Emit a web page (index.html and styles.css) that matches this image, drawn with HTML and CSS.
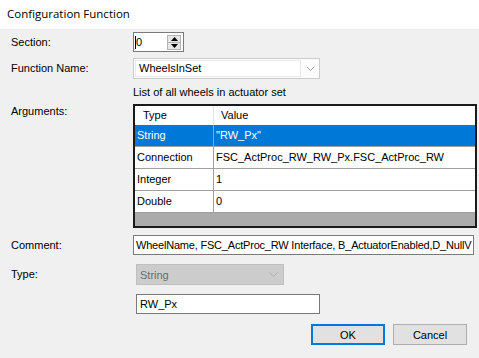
FILE: index.html
```html
<!DOCTYPE html>
<html>
<head>
<meta charset="utf-8">
<link rel="stylesheet" href="styles.css">
</head>
<body>
<div class="title">Configuration Function</div>
<div class="content">
  <div class="row r-section">
    <div class="lbl">Section:</div>
    <div class="spin">
      <div class="spin-val"><span class="caret"></span>0</div>
      <div class="spin-btns">
        <div class="sbtn"><svg width="7" height="4" viewBox="0 0 7 4"><path d="M0 4 L3.5 0 L7 4 Z" fill="#000"/></svg></div>
        <div class="sbtn"><svg width="7" height="4" viewBox="0 0 7 4"><path d="M0 0 L3.5 4 L7 0 Z" fill="#000"/></svg></div>
      </div>
    </div>
  </div>
  <div class="row r-func">
    <div class="lbl">Function Name:</div>
    <div class="combo">
      <div class="combo-text">WheelsInSet</div>
      <div class="combo-arrow"><svg width="9" height="5" viewBox="0 0 9 5"><path d="M0.5 0.5 L4.5 4.5 L8.5 0.5" fill="none" stroke="#a8a8a8" stroke-width="1"/></svg></div>
    </div>
  </div>
  <div class="note">List of all wheels in actuator set</div>
  <div class="row r-args">
    <div class="lbl lbl-top">Arguments:</div>
    <div class="grid">
      <div class="g-row g-head">
        <div class="c1">Type</div>
        <div class="c2">Value</div>
      </div>
      <div class="g-row g-data sel">
        <div class="c1">String</div>
        <div class="c2">"RW_Px"</div>
      </div>
      <div class="g-row g-data">
        <div class="c1">Connection</div>
        <div class="c2">FSC_ActProc_RW_RW_Px.FSC_ActProc_RW</div>
      </div>
      <div class="g-row g-data">
        <div class="c1">Integer</div>
        <div class="c2">1</div>
      </div>
      <div class="g-row g-data">
        <div class="c1">Double</div>
        <div class="c2">0</div>
      </div>
      <div class="g-empty"></div>
    </div>
  </div>
  <div class="row r-comment">
    <div class="lbl">Comment:</div>
    <div class="tbox tbox-comment">WheelName, FSC_ActProc_RW Interface, B_ActuatorEnabled,D_NullV</div>
  </div>
  <div class="row r-type">
    <div class="lbl">Type:</div>
    <div class="combo-dis">
      <div class="combo-text">String</div>
      <div class="combo-arrow"><svg width="9" height="5" viewBox="0 0 9 5"><path d="M0.5 0.5 L4.5 4.5 L8.5 0.5" fill="none" stroke="#b4b4b4" stroke-width="1"/></svg></div>
    </div>
  </div>
  <div class="row r-name">
    <div class="lbl"></div>
    <div class="tbox tbox-name">RW_Px</div>
  </div>
  <div class="buttons">
    <div class="btn btn-ok">OK</div>
    <div class="btn">Cancel</div>
  </div>
</div>
</body>
</html>
```

FILE: styles.css
```css
html, body {
  margin: 0;
  padding: 0;
}
body {
  width: 479px;
  height: 358px;
  overflow: hidden;
  background: #f0f0f0;
  font-family: "Liberation Sans", Arial, sans-serif;
  font-size: 11px;
  color: #000;
}
.title {
  height: 29px;
  background: #fff;
  padding-left: 7px;
  line-height: 28px;
  font-family: "Open Sans", "Noto Sans", sans-serif;
  font-size: 11.5px;
  color: #000;
}
.content {
  display: flex;
  flex-direction: column;
  padding-left: 11px;
}
.row {
  display: flex;
  align-items: center;
}
.lbl {
  width: 122px;
  flex: none;
  line-height: 13px;
}
.lbl-top {
  align-self: flex-start;
  padding-top: 1px;
}
/* Section */
.r-section {
  margin-top: 3px;
  height: 20px;
}
.spin {
  box-sizing: border-box;
  width: 51px;
  height: 20px;
  border: 1px solid #7a7a7a;
  background: #fff;
  display: flex;
  align-items: center;
  justify-content: space-between;
}
.spin-val {
  padding-left: 1px;
  display: flex;
  align-items: center;
  line-height: 13px;
}
.caret {
  display: inline-block;
  width: 1px;
  height: 13px;
  background: #000;
}
.spin-btns {
  display: flex;
  flex-direction: column;
  margin-right: 2px;
}
.sbtn {
  box-sizing: border-box;
  width: 14px;
  height: 8px;
  background: #e6e6e6;
  border: 1px solid #b4b4b4;
  display: flex;
  align-items: center;
  justify-content: center;
}
.sbtn + .sbtn {
  border-top: none;
  height: 7px;
}
/* Function */
.r-func {
  margin-top: 6px;
  height: 21px;
}
.combo {
  box-sizing: border-box;
  width: 187px;
  height: 21px;
  border: 1px solid #cccccc;
  background: #fcfcfc;
  display: flex;
  align-items: center;
}
.combo .combo-text {
  box-sizing: border-box;
  flex: 1;
  height: 17px;
  margin-left: 1px;
  border: 1px solid #eaeaea;
  background: #fff;
  padding-left: 3px;
  line-height: 15px;
}
.combo-arrow {
  width: 18px;
  flex: none;
  display: flex;
  align-items: center;
  justify-content: center;
}
.note {
  margin-top: 7px;
  padding-left: 122px;
  line-height: 13px;
  height: 13px;
}
/* Arguments grid */
.r-args {
  margin-top: 5px;
  align-items: flex-start;
}
.grid {
  box-sizing: border-box;
  width: 344px;
  height: 124px;
  border: 2px solid #1a1a1a;
  background: #ababab;
  display: flex;
  flex-direction: column;
}
.g-row {
  display: flex;
  background: #fff;
}
.g-head {
  height: 19px;
  line-height: 19px;
}
.g-head .c1 {
  box-sizing: border-box;
  width: 79px;
  padding-left: 8px;
  border-right: 1px solid #e3e3e3;
}
.g-head .c2 {
  padding-left: 7px;
}
.g-data {
  height: 22px;
  box-sizing: border-box;
  border-bottom: 1px solid #a0a0a0;
  line-height: 21px;
}
.g-data .c1 {
  box-sizing: border-box;
  width: 79px;
  padding-left: 2px;
  border-right: 1px solid #a0a0a0;
}
.g-data .c2 {
  padding-left: 2px;
  white-space: nowrap;
}
.sel {
  background: #0078d7;
  color: #fff;
}
.g-empty {
  flex: 1;
}
/* Comment */
.r-comment {
  margin-top: 7px;
  height: 20px;
}
.tbox {
  box-sizing: border-box;
  height: 20px;
  border: 1px solid #7a7a7a;
  background: #fff;
  line-height: 18px;
  padding-left: 2px;
  white-space: nowrap;
  overflow: hidden;
}
.tbox-comment {
  width: 341px;
  letter-spacing: -0.2px;
}
/* Type */
.r-type {
  margin-top: 9px;
  height: 21px;
}
.combo-dis {
  box-sizing: border-box;
  margin-left: 3px;
  width: 148px;
  height: 21px;
  border: 1px solid #bfbfbf;
  background: #cccccc;
  color: #6d6d6d;
  display: flex;
  align-items: center;
}
.combo-dis .combo-text {
  flex: 1;
  padding-left: 3px;
}
.combo-dis .combo-arrow {
  width: 20px;
}
/* Name */
.r-name {
  margin-top: 9px;
  height: 20px;
}
.tbox-name {
  margin-left: 3px;
  width: 184px;
  padding-left: 3px;
}
/* Buttons */
.buttons {
  margin-top: 10px;
  display: flex;
  justify-content: flex-end;
  gap: 8px;
  padding-right: 12px;
}
.btn {
  box-sizing: border-box;
  width: 74px;
  height: 21px;
  border: 1px solid #adadad;
  background: #e1e1e1;
  display: flex;
  align-items: center;
  justify-content: center;
}
.btn-ok {
  border: 2px solid #0078d7;
}
```
